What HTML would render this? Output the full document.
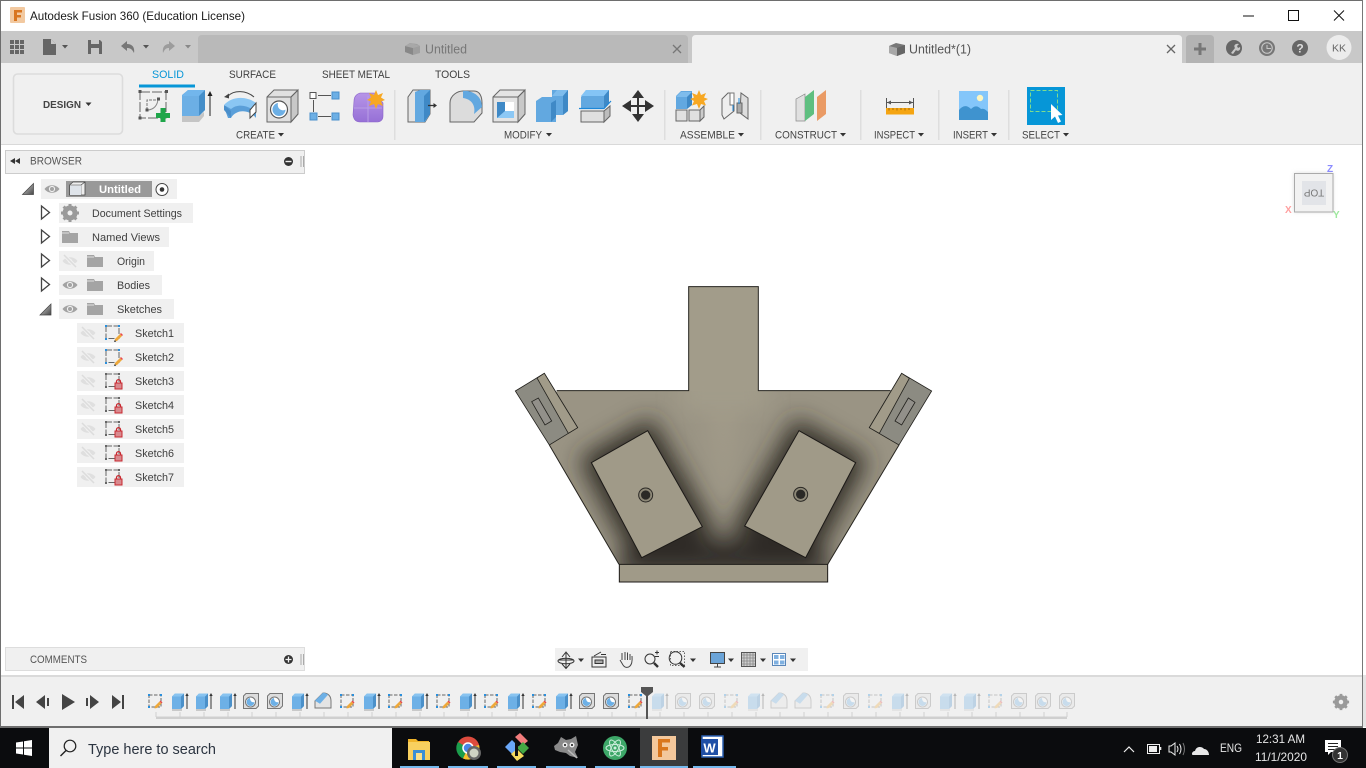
<!DOCTYPE html>
<html><head><meta charset="utf-8"><title>Autodesk Fusion 360</title>
<style>
html,body{margin:0;padding:0;width:1366px;height:768px;overflow:hidden;background:#fff}
svg{display:block;position:absolute;left:0;top:0}
text{font-family:"Liberation Sans",sans-serif;fill:#3c3c3c;font-size:10px}
.t{font-size:11px;fill:#3f3f3f}
.r{font-size:11px;fill:#444}
.l{font-size:11px;fill:#555}
</style></head><body>
<svg width="1366" height="768" viewBox="0 0 1366 768" xmlns="http://www.w3.org/2000/svg">
<defs>
<filter id="b1" x="-40%" y="-40%" width="180%" height="180%"><feGaussianBlur stdDeviation="36"/></filter>
<filter id="b2" x="-60%" y="-40%" width="220%" height="180%"><feGaussianBlur stdDeviation="30"/></filter>
<filter id="vs" x="-30%" y="-30%" width="160%" height="160%"><feGaussianBlur stdDeviation="2"/></filter>
<clipPath id="body"><path d="M170 332H566V20H775V332H1172L1197 495L983 853H357L148 495Z"/></clipPath>
<linearGradient id="tri" x1="0" y1="0" x2="1" y2="1"><stop offset="0" stop-color="#ddd"/><stop offset="1" stop-color="#444"/></linearGradient>
<linearGradient id="purp" x1="0" y1="0" x2="0" y2="1"><stop offset="0" stop-color="#b795e8"/><stop offset="1" stop-color="#9670d6"/></linearGradient>

<g id="eye"><path d="M-7.500 0C-4 -5 4 -5 7.500 0C4 5 -4 5 -7.500 0Z" fill="#a3a3a3"/><circle r="3.100" fill="#f0f0f0"/><circle r="2" fill="#a3a3a3"/></g>
<g id="eyeoff"><path d="M-7.500 0C-4 -5 4 -5 7.500 0C4 5 -4 5 -7.500 0Z" fill="#dfdfdf"/><circle r="2.200" fill="#f0f0f0"/><path d="M-6 -6L6 6" stroke="#f0f0f0" stroke-width="3.400"/><path d="M-6 -6L6 6" stroke="#dcdcdc" stroke-width="1.500"/></g>
<g id="folder"><path d="M0 1H7L8 3H16V13H0Z" fill="#a4a4a4"/><path d="M0 3H7" stroke="#f0f0f0" stroke-width=".8"/></g>
<g id="closed"><path d="M1 1L9 7.500L1 14Z" fill="#fff" stroke="#444" stroke-width="1.300"/></g>
<g id="open"><path d="M0 11L11 0V11Z" fill="url(#tri)" stroke="#444" stroke-width=".7"/></g>
<g id="skd"><rect x="1" y="1" width="13" height="12.500" fill="none" stroke="#666" stroke-width="1" stroke-dasharray="6 1.500"/></g>
<g id="sklock"><use href="#skd"/><g fill="#666"><rect x="0" y="0" width="2" height="2"/><rect x="13" y="0" width="2" height="2"/><rect x="0" y="13" width="2" height="2"/></g><path d="M11.500 10V8.600A2 2 0 0 1 15.500 8.600V10" fill="none" stroke="#c8282f" stroke-width="1.300"/><rect x="10" y="10" width="7" height="6" fill="#d88a8f" stroke="#c8282f"/></g>
<g id="skpen"><use href="#skd"/><g fill="#2a8fdc"><rect x="0" y="0" width="2" height="2"/><rect x="13" y="0" width="2" height="2"/><rect x="0" y="13" width="2" height="2"/></g><path d="M10 14L15 9L17 11L12 16L9.500 16.500Z" fill="#eea83a"/><path d="M15 9L16 8L18 10L17 11Z" fill="#e9484c"/><path d="M9 15.500h2v1.500h-2z" fill="#666"/></g>

<g id="tsk"><rect x="-6" y="-6" width="12" height="12" fill="none" stroke="#666" stroke-dasharray="3.500 1.500"/><g fill="#2a8fdc"><rect x="-7" y="-7" width="2" height="2"/><rect x="5" y="-7" width="2" height="2"/><rect x="-7" y="5" width="2" height="2"/><rect x="5" y="-7" width="2" height="2"/></g><path d="M0 5L4.500 0.500L6.500 2.500L2 7L-.5 7.500Z" fill="#eea83a"/><path d="M4.500 .5L5.500 -.5L7.500 1.500L6.500 2.500Z" fill="#e9484c"/></g>
<g id="tex"><path d="M-7 -4.500L-4 -7.500H5V5L2 8H-7Z" fill="#6db0e6"/><path d="M2 -4.500L5 -7.500V5L2 8Z" fill="#4b90c9"/><path d="M-7 -4.500H2L5 -7.500H-4Z" fill="#88c3f0"/><path d="M-7 8H2L3 7V10H-7Z" fill="#c9c9c9"/><path d="M8 8V-6" stroke="#333"/><path d="M8 -8L6.300 -5H9.700Z" fill="#333"/></g>
<g id="tho"><path d="M-7.500 -5L-5 -7.500H7.500V5L5 7.500H-7.500Z" fill="#ddd" stroke="#777"/><circle cy="1" cx="-.5" r="5" fill="#fff" stroke="#777"/><path d="M-4.500 1A4 4 0 0 0 3.500 1C1 2 -1 0 -1 -3A4 4 0 0 0 -4.500 1Z" fill="#6db0e6"/></g>
<g id="tfi"><path d="M-8 7V0L0 -8C6 -8 8 -4 8 0V7Z" fill="#e4e4e4" stroke="#777"/><path d="M-8 0L0 -8C2 -8 4 -7 5 -6L-3 3Z" fill="#6db0e6" transform="translate(0,-.3)"/></g>
<path id="car" d="M0 0H6L3 3.500Z" fill="#333"/>
<path id="car2" d="M0 0H6L3 3.500Z" fill="#555"/>
<g id="gear"><circle r="5" fill="none" stroke="#9a9a9a" stroke-width="5"/><g stroke="#9a9a9a" stroke-width="3"><path d="M0 -9V-6M0 6V9M-9 0H-6M6 0H9M-6.400 -6.400L-4.300 -4.300M4.300 4.300L6.400 6.400M-6.400 6.400L-4.300 4.300M4.300 -4.300L6.400 -6.400"/></g></g>
</defs>

<!-- window base -->
<rect width="1366" height="768" fill="#fff"/>
<rect x="0" y="0" width="1363" height="1" fill="#6e6e6e"/>
<rect x="0" y="31" width="1363" height="32" fill="#c8c8c8"/>
<rect x="0" y="63" width="1363" height="81" fill="#f0f0f0"/>
<rect x="0" y="144" width="1363" height="1" fill="#d9d9d9"/>
<rect x="1362" y="0" width="1" height="727" fill="#777"/>
<rect x="1363" y="0" width="3" height="728" fill="#fff"/>
<rect x="1363" y="675" width="3" height="52" fill="#e4e4e4"/>
<rect x="0" y="0" width="1" height="727" fill="#6e6e6e"/>

<!-- title bar -->
<rect x="10" y="7" width="15" height="16" rx="1" fill="#f2c9a0"/>
<path d="M14 10H22V12.500H17V15H21V17.500H17V21H14Z" fill="#d9751f"/>
<text x="30" y="20" style="font-size:12px;fill:#1a1a1a" textLength="215" lengthAdjust="spacingAndGlyphs">Autodesk Fusion 360 (Education License)</text>
<path d="M1243 16H1254" stroke="#111" stroke-width="1"/>
<rect x="1288.500" y="10.500" width="10" height="10" fill="none" stroke="#111"/>
<path d="M1334 10.500L1344 20.500M1344 10.500L1334 20.500" stroke="#111"/>

<!-- strip left icons -->
<g fill="#666"><rect x="10" y="40" width="4" height="4"/><rect x="15" y="40" width="4" height="4"/><rect x="20" y="40" width="4" height="4"/><rect x="10" y="45" width="4" height="4"/><rect x="15" y="45" width="4" height="4"/><rect x="20" y="45" width="4" height="4"/><rect x="10" y="50" width="4" height="4"/><rect x="15" y="50" width="4" height="4"/><rect x="20" y="50" width="4" height="4"/></g>
<path d="M43 39H51L56 44V55H43Z" fill="#666"/><path d="M51 39V44H56" fill="#c8c8c8"/>
<use href="#car2" x="62" y="45"/>
<path d="M88 40H100L102 42V54H88Z" fill="#666"/><rect x="91" y="40" width="8" height="4" fill="#c8c8c8"/><rect x="91" y="48" width="8" height="6" fill="#c8c8c8"/>
<path d="M121 46L127 41V44C132 44 135 47 134 53C132 49 130 48 127 48V51Z" fill="#777"/>
<use href="#car2" x="143" y="45"/>
<path d="M175 46L169 41V44C165 44 162 47 163 53C165 49 166 48 169 48V51Z" fill="#9c9c9c"/>
<path d="M185 45H191L188 48.500Z" fill="#888"/>

<!-- tabs -->
<path d="M198 63V39Q198 35 202 35H684Q688 35 688 39V63Z" fill="#b9b9b9"/>
<path d="M405 46L410 43L417 44L420 46V53L413 55L405 52Z" fill="#9e9e9e"/><path d="M405 46L413 48V55L405 52Z" fill="#888"/><path d="M405 46L411 43L420 46L413 48Z" fill="#a8a8a8"/>
<text x="425" y="53.500" style="font-size:12.500px;fill:#777" textLength="42" lengthAdjust="spacingAndGlyphs">Untitled</text>
<path d="M673 45L681 53M681 45L673 53" stroke="#777" stroke-width="1.300"/>
<path d="M692 63V39Q692 35 696 35H1178Q1182 35 1182 39V63Z" fill="#f0f0f0"/>
<path d="M889 46L896 43L905 45V53L897 56L889 53Z" fill="#777"/><path d="M889 46L897 48V56L889 53Z" fill="#a8a8a8"/><path d="M897 48L905 45V53L897 56Z" fill="#666"/>
<text x="909" y="53.500" style="font-size:12.500px;fill:#555" textLength="62" lengthAdjust="spacingAndGlyphs">Untitled*(1)</text>
<path d="M1167 45L1175 53M1175 45L1167 53" stroke="#666" stroke-width="1.300"/>
<path d="M1186 63V39Q1186 35 1190 35H1210Q1214 35 1214 39V63Z" fill="#b3b3b3"/>
<path d="M1200 43V55M1194 49H1206" stroke="#777" stroke-width="3"/>
<circle cx="1234" cy="48" r="8" fill="#666"/><path d="M1231 53L1235 48C1233 45 1236 43 1239 44L1237 46L1238 48L1240 47C1241 50 1238 52 1236 50L1233 54Z" fill="#c8c8c8"/>
<circle cx="1267" cy="48" r="7.500" fill="#777" stroke="#777"/><circle cx="1267" cy="48" r="5.800" fill="#c8c8c8"/><circle cx="1267" cy="48" r="4.700" fill="#777"/><path d="M1267 45V48.500H1271" stroke="#c8c8c8" fill="none"/>
<circle cx="1300" cy="48" r="8" fill="#666"/>
<text x="1300" y="52.500" text-anchor="middle" style="font-size:12px;font-weight:bold;fill:#ddd">?</text>
<circle cx="1339" cy="47.500" r="12.500" fill="#ececec"/>
<text x="1339" y="51.500" text-anchor="middle" style="font-size:10.500px;fill:#666">KK</text>

<!-- ribbon tabs -->
<text x="152" y="78" style="fill:#0696d7;font-size:11px" textLength="32" lengthAdjust="spacingAndGlyphs">SOLID</text>
<rect x="139" y="84.500" width="56" height="3" fill="#0696d7"/>
<text x="229" y="78" class="t" textLength="47" lengthAdjust="spacingAndGlyphs">SURFACE</text>
<text x="322" y="78" class="t" textLength="68" lengthAdjust="spacingAndGlyphs">SHEET METAL</text>
<text x="435" y="78" class="t" textLength="35" lengthAdjust="spacingAndGlyphs">TOOLS</text>
<rect x="13.500" y="74" width="109" height="60" rx="4" fill="#f0f0f0" stroke="#dcdcdc" stroke-width="1.600"/>
<text x="43" y="108" style="font-size:10.500px;font-weight:bold;fill:#444" textLength="38" lengthAdjust="spacingAndGlyphs">DESIGN</text>
<use href="#car" x="85.500" y="102.500"/>

<!-- sketch -->
<rect x="140" y="92" width="26" height="26" fill="none" stroke="#666" stroke-dasharray="10 2"/>
<g fill="#555"><rect x="138.500" y="90" width="3" height="3"/><rect x="165" y="90" width="3" height="3"/><rect x="138.500" y="116.500" width="3" height="3"/></g>
<path d="M147 110V100H158" fill="none" stroke="#777" stroke-dasharray="3 1"/><path d="M147 110C154 110 158 105 158 98" fill="none" stroke="#888"/>
<rect x="145.500" y="108.500" width="3" height="3" fill="#555"/><rect x="157" y="97.500" width="3" height="3" fill="#555"/>
<path d="M160.500 108H165.500V113H170V118H165.500V122H160.500V118H156V113H160.500Z" fill="#1fa64a"/>
<!-- extrude -->
<path d="M182 95L188 90H205V110L199 116H182Z" fill="#6cafe5"/><path d="M199 95L205 90V110L199 116Z" fill="#458ec9"/><path d="M182 96H199L205 90H188Z" fill="#72b6ec"/>
<path d="M182 116H199L204 112V116L199 122H182Z" fill="#c5c5c5"/>
<path d="M210 116V95" stroke="#222"/><path d="M210 91L207.500 96H212.500Z" fill="#222"/>
<!-- revolve -->
<path d="M224 107C231 99 247 99 252 106L256 111V118C249 109 236 109 231 118H228Z" fill="#5a9fd9"/>
<path d="M224 105C231 97 245 95 256 103L252 109C245 105 237 104 231 109Z" fill="#8ac6f3"/>
<path d="M224 105L231 111V118L224 110Z" fill="#4a8fcb"/>
<path d="M250 110L256 103V112L250 118Z" fill="#fff" stroke="#444"/>
<path d="M228 96C234 90 246 90 254 97" fill="none" stroke="#444"/><path d="M224 97L229 93.500V98.500Z" fill="#444"/>
<!-- hole -->
<path d="M267 97L274 90H298V114L291 122H267Z" fill="#e0e0e0" stroke="#666"/><path d="M291 97L298 90V114L291 122Z" fill="#c8c8c8" stroke="#666"/><path d="M267 97H291L298 90" fill="none" stroke="#666"/>
<circle cx="279" cy="109.500" r="8.500" fill="#fff" stroke="#555" stroke-width="1.200"/><path d="M272.500 109.500A6.500 6.500 0 0 0 285.500 109.500C282 112 276.500 108.500 278 103A6.500 6.500 0 0 0 272.500 109.500Z" fill="#6cafe5"/>
<!-- form connector -->
<rect x="310" y="92.500" width="6" height="6" fill="#fff" stroke="#555"/>
<rect x="332" y="92" width="7" height="7" fill="#6cafe5" stroke="#4a8fcb"/><rect x="310" y="113" width="7" height="7" fill="#6cafe5" stroke="#4a8fcb"/><rect x="332" y="113" width="7" height="7" fill="#6cafe5" stroke="#4a8fcb"/>
<path d="M318 95.500H331M313.500 100V112M318 116.500H331" stroke="#555"/>
<!-- form -->
<path d="M354 101Q354 95 360 93H375L383 103V116Q383 122 376 122H360Q354 122 353 115Z" fill="url(#purp)" stroke="#8a63c9" stroke-width=".6"/>
<path d="M354 108H382M368 96V122" stroke="#b99ee6" stroke-width="1"/>
<path d="M376 90L378 95L383 93L381 97.500L385 100L381 101.500L383 106L378 104L376 109L374 104L369 106L371 101.500L367 100L371 97.500L369 93L374 95Z" fill="#f7a823"/>
<text x="236" y="138.500" class="r" textLength="39" lengthAdjust="spacingAndGlyphs">CREATE</text><use href="#car" x="278" y="133"/>

<rect x="394" y="90" width="1.500" height="50" fill="#dedede"/>
<!-- press pull -->
<path d="M408 97L413 90H425L430 90V114L425 122H408Z" fill="#e4e4e4" stroke="#666"/><path d="M415 92L420 90H430V114L425 122H415Z" fill="#62a8e0"/><path d="M424 96L430 90V114L424 122Z" fill="#3f89c6"/>
<path d="M428 105.500H435" stroke="#333" stroke-width="1.300"/><path d="M437 105.500L433.500 103V108Z" fill="#333"/>
<!-- fillet -->
<path d="M450 122V103C450 95 458 91 463 91H474C480 91 482 97 482 103V113L474 122Z" fill="#dcdcdc" stroke="#666"/>
<path d="M463 91C468 90 482 93 482 107L474 114C476 105 471 99 463 98Z" fill="#62a8e0"/>
<!-- shell -->
<path d="M493 97L500 90H525V114L518 122H493Z" fill="#e4e4e4" stroke="#666"/><path d="M518 97L525 90V114L518 122Z" fill="#c8c8c8" stroke="#666"/><path d="M493 97H518L525 90" fill="none" stroke="#666"/>
<rect x="497" y="102" width="17" height="16" fill="#fff"/><path d="M497 102H505V111H514V118H497Z" fill="#3f89c6"/><path d="M505 111H514L514 118H497Z" fill="#8cc8f5"/>
<!-- combine -->
<path d="M536 101L542 97H552V90L556 90H568V111L563 115H556V122H536Z" fill="#62a8e0"/><path d="M552 96L557 90H568L563 96Z" fill="#7ebcec"/><path d="M563 96L568 90V111L563 115Z" fill="#3f89c6"/><path d="M551 103L556 100V117L551 122Z" fill="#3f89c6"/>
<!-- split -->
<path d="M581 97L586 90H609V101L604 108H581Z" fill="#62a8e0"/><path d="M581 96L586 90H609L604 96Z" fill="#84c4f5"/><path d="M604 96L609 90V103L604 108Z" fill="#3f89c6"/>
<path d="M581 111H604V122H581Z" fill="#e0e0e0" stroke="#666"/><path d="M604 111L610 106V116L604 122Z" fill="#bdbdbd" stroke="#666"/>
<path d="M579 108.500H604L611 101" fill="none" stroke="#1d87d8" stroke-width="1.200"/>
<!-- move -->
<path d="M638 96V116M628 106H648" stroke="#333" stroke-width="2"/><path d="M638 90L632 98H644ZM638 122L632 114H644ZM622 106L631 100V112ZM654 106L645 100V112Z" fill="#333"/>
<text x="504" y="138.500" class="r" textLength="38" lengthAdjust="spacingAndGlyphs">MODIFY</text><use href="#car" x="546" y="133"/>

<rect x="664" y="90" width="1.500" height="50" fill="#dedede"/>
<!-- assemble -->
<path d="M676 96L681 91H692V105H676Z" fill="#62a8e0"/><path d="M676 97H687L692 92H681Z" fill="#7ebcec"/><path d="M687 97L692 92V105L687 109Z" fill="#3f89c6"/><rect x="676" y="97" width="11" height="12" fill="#62a8e0"/>
<rect x="676" y="110" width="11" height="11" fill="#e0e0e0" stroke="#666"/><rect x="689" y="110" width="11" height="11" fill="#e0e0e0" stroke="#666"/><path d="M700 110L704 106V117L700 121Z" fill="#ccc" stroke="#666"/>
<path d="M699 90L701 95L706 93L704 97.500L708 99L704 101L706 105.500L701 104L699 109L697 104L692 105.500L694 101L690 99L694 97.500L692 93L697 95Z" fill="#f7a823"/>
<!-- joint -->
<path d="M722 99L728 93H734V111L724 119L722 115Z" fill="#eee" stroke="#666"/><path d="M748 98L741 93L740 113L748 119Z" fill="#ddd" stroke="#666"/><rect x="730" y="93" width="4" height="12" fill="#fff" stroke="#777"/><rect x="737" y="103" width="5" height="10" fill="#aaa" stroke="#666"/><path d="M733 105V111M739 98V104" stroke="#1d87d8"/>
<text x="680" y="138.500" class="r" textLength="55" lengthAdjust="spacingAndGlyphs">ASSEMBLE</text><use href="#car" x="738" y="133"/>

<rect x="760" y="90" width="1.500" height="50" fill="#dedede"/>
<!-- construct -->
<path d="M796 99L805 94V121H796Z" fill="#e0e0e0" stroke="#888" stroke-width=".7"/><path d="M805 97L814 90V114L805 121Z" fill="#5fbf80"/><path d="M817 97L826 90V114L817 121Z" fill="#ea9b65"/>
<text x="775" y="138.500" class="r" textLength="62" lengthAdjust="spacingAndGlyphs">CONSTRUCT</text><use href="#car" x="840" y="133"/>

<rect x="860" y="90" width="1.500" height="50" fill="#dedede"/>
<!-- inspect -->
<path d="M886.500 98V108M913.500 98V108M887 102.500H913" stroke="#555"/><path d="M887 102.500L891 100.500V104.500ZM913 102.500L909 100.500V104.500Z" fill="#555"/>
<rect x="886" y="108" width="28" height="6.500" fill="#f5a512"/>
<path d="M889 108V110.500M893 108V110M897 108V110.500M901 108V110M905 108V110.500M909 108V110" stroke="#8b5a00" stroke-width=".7"/>
<text x="874" y="138.500" class="r" textLength="41" lengthAdjust="spacingAndGlyphs">INSPECT</text><use href="#car" x="918" y="133"/>

<rect x="938" y="90" width="1.500" height="50" fill="#dedede"/>
<!-- insert -->
<rect x="959" y="91" width="29" height="29" fill="#84c6fa"/>
<path d="M959 120V110C963 105 967 105 971 109C975 105 978 106 981 109C984 108 986 110 988 112V120Z" fill="#3f93cf"/>
<circle cx="980" cy="98" r="3.200" fill="#fcf5c0"/>
<text x="953" y="138.500" class="r" textLength="35" lengthAdjust="spacingAndGlyphs">INSERT</text><use href="#car" x="991" y="133"/>

<rect x="1008" y="90" width="1.500" height="50" fill="#dedede"/>
<!-- select -->
<rect x="1027" y="87" width="38" height="38" fill="#0696d7"/>
<rect x="1030.500" y="90.500" width="27" height="21" fill="none" stroke="#7fdc8e" stroke-dasharray="4 2"/>
<path d="M1051 104V120L1055 116.500L1058 123L1061 121.500L1058 115.500L1062.500 115Z" fill="#fff"/>
<text x="1022" y="138.500" class="r" textLength="38" lengthAdjust="spacingAndGlyphs">SELECT</text><use href="#car" x="1063" y="133"/>

<!-- browser -->
<rect x="5.500" y="150.500" width="299" height="23" fill="#f0f0f0" stroke="#ccc"/>
<path d="M15 158V164L10 161ZM20 158V164L15 161Z" fill="#333"/>
<text x="30" y="164.500" class="l" textLength="52" lengthAdjust="spacingAndGlyphs">BROWSER</text>
<circle cx="288.500" cy="161.500" r="4.500" fill="#333"/><rect x="285.500" y="160.800" width="6" height="1.400" fill="#f0f0f0"/>
<path d="M301 156V167M303.500 156V167" stroke="#aaa"/>

<!-- tree -->
<use href="#open" x="22.500" y="183.500"/>
<rect x="41" y="179" width="136" height="20" fill="#f0f0f0"/>
<use href="#eye" x="52" y="189"/>
<rect x="66" y="181" width="86" height="16" fill="#999"/>
<path d="M69.500 185L73 182H85V195H69.500Z" fill="#eee" stroke="#444" stroke-width=".8"/><path d="M69.500 185H81V195" fill="none" stroke="#777" stroke-width=".7"/><path d="M81 185L85 182" stroke="#444" stroke-width=".7"/><path d="M70 185.500H81V195H70Z" fill="#dfe4ea"/>
<text x="99" y="193" style="fill:#fff;font-weight:bold;font-size:11px" textLength="42" lengthAdjust="spacingAndGlyphs">Untitled</text>
<circle cx="162" cy="189.500" r="6" fill="#fff" stroke="#444"/><circle cx="162" cy="189.500" r="2.300" fill="#333"/>

<use href="#closed" x="40.500" y="205"/>
<rect x="59" y="203" width="134" height="20" fill="#f0f0f0"/>
<use href="#gear" x="70" y="213"/>
<text x="92" y="217" class="t" textLength="90" lengthAdjust="spacingAndGlyphs">Document Settings</text>

<use href="#closed" x="40.500" y="229"/>
<rect x="59" y="227" width="110" height="20" fill="#f0f0f0"/>
<use href="#folder" x="62" y="230"/>
<text x="92" y="241" class="t" textLength="68" lengthAdjust="spacingAndGlyphs">Named Views</text>

<use href="#closed" x="40.500" y="253"/>
<rect x="59" y="251" width="95" height="20" fill="#f0f0f0"/>
<use href="#eyeoff" x="70" y="261"/>
<use href="#folder" x="87" y="254"/>
<text x="117" y="265" class="t" textLength="28" lengthAdjust="spacingAndGlyphs">Origin</text>

<use href="#closed" x="40.500" y="277"/>
<rect x="59" y="275" width="103" height="20" fill="#f0f0f0"/>
<use href="#eye" x="70" y="285"/>
<use href="#folder" x="87" y="278"/>
<text x="117" y="289" class="t" textLength="33" lengthAdjust="spacingAndGlyphs">Bodies</text>

<use href="#open" x="40" y="304"/>
<rect x="59" y="299" width="115" height="20" fill="#f0f0f0"/>
<use href="#eye" x="70" y="309"/>
<use href="#folder" x="87" y="302"/>
<text x="117" y="313" class="t" textLength="45" lengthAdjust="spacingAndGlyphs">Sketches</text>

<g>
<rect x="77" y="323" width="107" height="20" fill="#f0f0f0"/><use href="#eyeoff" x="88" y="333"/><use href="#skpen" x="105" y="325"/><text x="135" y="337" class="t" textLength="39" lengthAdjust="spacingAndGlyphs">Sketch1</text>
<rect x="77" y="347" width="107" height="20" fill="#f0f0f0"/><use href="#eyeoff" x="88" y="357"/><use href="#skpen" x="105" y="349"/><text x="135" y="361" class="t" textLength="39" lengthAdjust="spacingAndGlyphs">Sketch2</text>
<rect x="77" y="371" width="107" height="20" fill="#f0f0f0"/><use href="#eyeoff" x="88" y="381"/><use href="#sklock" x="105" y="373"/><text x="135" y="385" class="t" textLength="39" lengthAdjust="spacingAndGlyphs">Sketch3</text>
<rect x="77" y="395" width="107" height="20" fill="#f0f0f0"/><use href="#eyeoff" x="88" y="405"/><use href="#sklock" x="105" y="397"/><text x="135" y="409" class="t" textLength="39" lengthAdjust="spacingAndGlyphs">Sketch4</text>
<rect x="77" y="419" width="107" height="20" fill="#f0f0f0"/><use href="#eyeoff" x="88" y="429"/><use href="#sklock" x="105" y="421"/><text x="135" y="433" class="t" textLength="39" lengthAdjust="spacingAndGlyphs">Sketch5</text>
<rect x="77" y="443" width="107" height="20" fill="#f0f0f0"/><use href="#eyeoff" x="88" y="453"/><use href="#sklock" x="105" y="445"/><text x="135" y="457" class="t" textLength="39" lengthAdjust="spacingAndGlyphs">Sketch6</text>
<rect x="77" y="467" width="107" height="20" fill="#f0f0f0"/><use href="#eyeoff" x="88" y="477"/><use href="#sklock" x="105" y="469"/><text x="135" y="481" class="t" textLength="39" lengthAdjust="spacingAndGlyphs">Sketch7</text>
</g>

<!-- comments -->
<rect x="5.500" y="647.500" width="299" height="23" fill="#f0f0f0" stroke="#ddd"/>
<text x="30" y="663" class="l" textLength="57" lengthAdjust="spacingAndGlyphs">COMMENTS</text>
<circle cx="288.500" cy="659.500" r="4.500" fill="#333"/><path d="M285.500 659.500H291.500M288.500 656.500V662.500" stroke="#f0f0f0" stroke-width="1.300"/>
<path d="M301 654V665M303.500 654V665" stroke="#aaa"/>

<!-- model -->
<g transform="translate(500,280) scale(.33333)">
<g clip-path="url(#body)">
<rect x="100" y="0" width="1150" height="900" fill="#9a9484"/>
<g filter="url(#b1)">
<path d="M443 452L607 740L425 833L274 548Z" fill="#302d27" stroke="#302d27" stroke-width="56"/>
<path d="M897 452L1067 548L917 833L734 738Z" fill="#302d27" stroke="#302d27" stroke-width="56"/>
<path d="M357 870H983L930 790H420Z" fill="#2e2b25" stroke="#2e2b25" stroke-width="30"/>
</g>
<path d="M610 345H730L685 650H655Z" fill="#a09a88" filter="url(#b2)"/>
<path d="M566 20H775V332H566Z" fill="#a29c8a"/>
<path d="M540 290H800V390H540Z" fill="#a29c8a" filter="url(#b2)"/>
</g>
<path d="M170 332H566V20H775V332H1172M148 495L357 853M1197 495L983 853" fill="none" stroke="#26241f" stroke-width="3"/>
<path d="M358 853H983V906H358Z" fill="#a09a88" stroke="#1c1a17" stroke-width="3"/>
<path d="M443 452L607 740L425 833L274 548Z" fill="#a09a88" stroke="#1c1a17" stroke-width="3"/>
<path d="M897 452L1067 548L917 833L734 738Z" fill="#a09a88" stroke="#1c1a17" stroke-width="3"/>
<circle cx="437" cy="645" r="21" fill="#8d8877" stroke="#2b2925" stroke-width="3"/><circle cx="437" cy="645" r="14" fill="#2a2926"/>
<circle cx="902" cy="643" r="21" fill="#8d8877" stroke="#2b2925" stroke-width="3"/><circle cx="902" cy="643" r="14" fill="#2a2926"/>
<path d="M46 333L133 280L233 443L148 495Z" fill="#8c8b82" stroke="#22211d" stroke-width="2.400"/>
<path d="M111 294L133 280L233 443L205 460Z" fill="#a19b89" stroke="#22211d" stroke-width="2.400"/>
<path d="M95 365L115 354L155 423L135 435Z" fill="#92908a" stroke="#22211d" stroke-width="2.400"/>
<path d="M1205 280L1295 333L1197 495L1108 443Z" fill="#8c8b82" stroke="#22211d" stroke-width="2.400"/>
<path d="M1205 280L1228 295L1138 460L1108 443Z" fill="#a19b89" stroke="#22211d" stroke-width="2.400"/>
<path d="M1225 354L1245 367L1205 435L1185 423Z" fill="#92908a" stroke="#22211d" stroke-width="2.400"/>
</g>

<!-- viewcube -->
<rect x="1294" y="173" width="39" height="39" fill="#bbb" filter="url(#vs)" opacity=".5"/>
<rect x="1294.500" y="173.500" width="38.500" height="38.500" fill="#f2f2f2" stroke="#aaa"/>
<rect x="1302" y="181" width="24" height="24" fill="#e2e4e8"/>
<text x="1314" y="196.500" text-anchor="middle" transform="rotate(180 1314 193)" style="font-size:10px;fill:#777">TOP</text>
<text x="1327" y="172" style="font-size:10px;font-weight:bold;fill:#8a8aff">Z</text>
<text x="1285" y="213" style="font-size:10px;font-weight:bold;fill:#ffa0a0">X</text>
<text x="1333" y="218" style="font-size:10px;font-weight:bold;fill:#9de89d">Y</text>

<!-- navbar -->
<rect x="555" y="648" width="253" height="23" fill="#f0f0f0"/>
<g fill="none" stroke="#333">
<path d="M566 653V668M562 657L566 652L570 657M562 664L566 668.500L570 664M558.500 660H574" stroke-width="1"/><ellipse cx="566" cy="661" rx="8" ry="2.800"/>
<path d="M592 657H606V667H592Z"/><rect x="595" y="660" width="8" height="3.500" fill="#aaa"/><path d="M594 656L601 652M601 654.500H606"/>
<path d="M620 660L623 665C625 668 628 668 630 666C633 663 632 658 632 656M622 660V653M625 660V652M627.500 660V652.500M630 660V654" stroke="#444"/>
<circle cx="650" cy="659" r="5"/><path d="M654 663L658 667" stroke-width="2.400"/><path d="M655 652.500H659M657 650.500V654.500M655 656.500H659"/>
<rect x="670.500" y="651.500" width="14" height="14" stroke-dasharray="1.500 1.500" stroke="#666"/><circle cx="675.500" cy="658" r="6.300"/><path d="M680 663L684.500 667" stroke-width="2.400"/>
</g>
<use href="#car" x="578" y="658.500"/><use href="#car" x="690" y="658.500"/>
<rect x="710.500" y="652.500" width="14" height="11" fill="#6ba4d8" stroke="#444"/><path d="M714 667H721M717.500 664V667" stroke="#444"/>
<use href="#car" x="728" y="658.500"/>
<rect x="741.500" y="652.500" width="14" height="14" fill="#cfcfcf" stroke="#555"/><path d="M744 653V666M747 653V666M750 653V666M753 653V666M742 655H755M742 658H755M742 661H755M742 664H755" stroke="#888" stroke-width=".8"/>
<use href="#car" x="760" y="658.500"/>
<rect x="772.500" y="653.500" width="13" height="12" fill="#fff" stroke="#5a86b8"/><rect x="774" y="655" width="4.500" height="4" fill="#7fb0e0"/><rect x="780" y="655" width="4.500" height="4" fill="#7fb0e0"/><rect x="774" y="660.500" width="4.500" height="4" fill="#7fb0e0"/><rect x="780" y="660.500" width="4.500" height="4" fill="#7fb0e0"/>
<use href="#car" x="790" y="658.500"/>

<!-- timeline -->
<rect x="1" y="675" width="1361" height="2" fill="#dadada"/>
<rect x="1" y="677" width="1361" height="49" fill="#f0f0f0"/>
<rect x="0" y="726" width="1363" height="2" fill="#6e6e6e"/>
<rect x="0" y="728" width="1366" height="40" fill="#0b0c0e"/>
<g fill="#444">
<rect x="12" y="695" width="2" height="14"/><path d="M24 695V709L15 702Z"/>
<path d="M36 702L45 695V709ZM47 698H49V706H47Z"/>
<path d="M62 694L75 702L62 710Z"/>
<path d="M86 698H88V706H86ZM90 695L99 702L90 709Z"/>
<path d="M112 695L121 702L112 709ZM122 695H124V709H122Z"/>
</g>
<rect x="156" y="716.500" width="911" height="2.500" fill="#cfcfcf"/>
<path d="M156 712V717M180 712V717M204 712V717M228 712V717M252 712V717M276 712V717M300 712V717M324 712V717M348 712V717M372 712V717M396 712V717M420 712V717M444 712V717M468 712V717M492 712V717M516 712V717M540 712V717M564 712V717M588 712V717M612 712V717M636 712V717M660 712V717M684 712V717M708 712V717M732 712V717M756 712V717M780 712V717M804 712V717M828 712V717M852 712V717M876 712V717M900 712V717M924 712V717M948 712V717M972 712V717M996 712V717M1020 712V717M1044 712V717M1067 712V717" stroke="#cfcfcf" stroke-width="1"/>
<use href="#tsk" x="155" y="701"/><use href="#tex" x="179" y="701"/><use href="#tex" x="203" y="701"/><use href="#tex" x="227" y="701"/><use href="#tho" x="251" y="701"/><use href="#tho" x="275" y="701"/><use href="#tex" x="299" y="701"/><use href="#tfi" x="323" y="701"/><use href="#tsk" x="347" y="701"/><use href="#tex" x="371" y="701"/><use href="#tsk" x="395" y="701"/><use href="#tex" x="419" y="701"/><use href="#tsk" x="443" y="701"/><use href="#tex" x="467" y="701"/><use href="#tsk" x="491" y="701"/><use href="#tex" x="515" y="701"/><use href="#tsk" x="539" y="701"/><use href="#tex" x="563" y="701"/><use href="#tho" x="587" y="701"/><use href="#tho" x="611" y="701"/><use href="#tsk" x="635" y="701"/>
<g opacity=".3">
<use href="#tex" x="659" y="701"/><use href="#tho" x="683" y="701"/><use href="#tho" x="707" y="701"/><use href="#tsk" x="731" y="701"/><use href="#tex" x="755" y="701"/><use href="#tfi" x="779" y="701"/><use href="#tfi" x="803" y="701"/><use href="#tsk" x="827" y="701"/><use href="#tho" x="851" y="701"/><use href="#tsk" x="875" y="701"/><use href="#tex" x="899" y="701"/><use href="#tho" x="923" y="701"/><use href="#tex" x="947" y="701"/><use href="#tex" x="971" y="701"/><use href="#tsk" x="995" y="701"/><use href="#tho" x="1019" y="701"/><use href="#tho" x="1043" y="701"/><use href="#tho" x="1067" y="701"/>
</g>
<path d="M641 687H653V692L648 696V719H646V696L641 692Z" fill="#555"/>
<use href="#gear" x="1341" y="702" transform="translate(1341 702) scale(.9) translate(-1341 -702)"/>

<!-- taskbar -->
<g fill="#fff"><path d="M16 742.500L23 741.500V747.500H16ZM24 741.300L32 740V747.500H24ZM16 748.500H23V754.500L16 753.500ZM24 748.500H32V756L24 754.700Z"/></g>
<rect x="49" y="728" width="343" height="40" fill="#f0f0f0"/>
<circle cx="70" cy="746" r="5.800" fill="none" stroke="#222" stroke-width="1.200"/><path d="M66 750.500L60.500 756" stroke="#222" stroke-width="1.400"/>
<text x="88" y="754" style="font-size:14.500px;fill:#2b3440" textLength="128" lengthAdjust="spacingAndGlyphs">Type here to search</text>

<path d="M408 739H416L418 741H429V742H408Z" fill="#f0b429"/><path d="M408 742H430V760H408Z" fill="#f8d05f"/><path d="M413 750H425V760H413Z" fill="#3b8fd6"/><path d="M416 753H422V760H416Z" fill="#fbe08a"/>
<rect x="400" y="766" width="39" height="2" fill="#76b9ed"/>

<circle cx="468" cy="748" r="11.500" fill="#dd4b3e"/><path d="M468 748L458 742A11.500 11.500 0 0 0 463 758.500Z" fill="#1a9d4c"/><path d="M468 748L479 745A11.500 11.500 0 0 1 463 758.500Z" fill="#f8c12c"/><circle cx="468" cy="748" r="5" fill="#4a86e8" stroke="#fff" stroke-width="1.500"/>
<circle cx="474" cy="753" r="7" fill="#666"/><circle cx="474" cy="753" r="4.500" fill="#cfd3c4"/>
<rect x="448" y="766" width="40" height="2" fill="#76b9ed"/>

<path d="M505 747L512 740L519 747L512 754Z" fill="#6aa7f8"/><path d="M515 737L520 733L528 741L523 745Z" fill="#f27c7c"/><path d="M517 748L523 742L529 748L523 754Z" fill="#45a844"/><path d="M511 754L517 749L524 756L517 761Z" fill="#f5db5d"/><path d="M515 741L518 744V756L515 756Z" fill="#111"/>
<rect x="497" y="766" width="39" height="2" fill="#76b9ed"/>

<path d="M554 746L558 743L561 737L566 740L571 739L576 736L578 745L575 752L578 758L570 756L566 753L560 752L555 750Z" fill="#8a8a8a"/><circle cx="565" cy="745" r="2.500" fill="#eee"/><circle cx="572" cy="745" r="2.500" fill="#eee"/><circle cx="565" cy="745" r="1" fill="#111"/><circle cx="572" cy="745" r="1" fill="#111"/><path d="M568 750L577 758" stroke="#bbb" stroke-width="1.500"/>
<rect x="546" y="766" width="40" height="2" fill="#76b9ed"/>

<circle cx="615" cy="748" r="12" fill="#3da768"/><g fill="none" stroke="#cdeedd" stroke-width="1"><ellipse cx="615" cy="748" rx="9" ry="3.500"/><ellipse cx="615" cy="748" rx="9" ry="3.500" transform="rotate(60 615 748)"/><ellipse cx="615" cy="748" rx="9" ry="3.500" transform="rotate(-60 615 748)"/></g><circle cx="615" cy="748" r="1.500" fill="#cdeedd"/>
<rect x="595" y="766" width="40" height="2" fill="#76b9ed"/>

<rect x="640" y="728" width="48" height="40" fill="#3b3c3d"/>
<rect x="652" y="736" width="24" height="24" fill="#f3c79b"/>
<path d="M658 739H670V742.500H662V747H668V750.500H662V757H658Z" fill="#d9761d"/>
<rect x="640" y="766" width="48" height="2" fill="#76b9ed"/>

<rect x="702" y="736" width="21" height="21" fill="#fff" stroke="#2b5fb0" stroke-width="1.500"/>
<rect x="701" y="739" width="17" height="16" fill="#1f4fa6"/>
<text x="709.500" y="752.500" text-anchor="middle" style="font-size:13px;font-weight:bold;fill:#fff">W</text>
<rect x="693" y="766" width="43" height="2" fill="#76b9ed"/>

<!-- tray -->
<path d="M1124 752L1129 747L1134 752" fill="none" stroke="#eee" stroke-width="1.200"/>
<rect x="1147.500" y="744.500" width="12" height="9" fill="none" stroke="#eee"/><rect x="1149" y="746" width="8" height="6" fill="#eee"/><rect x="1160" y="747" width="1.300" height="3" fill="#eee"/>
<path d="M1169 746H1171L1175 743V755L1171 752H1169Z" fill="none" stroke="#eee"/><path d="M1177 746Q1179 749 1177 752M1179.500 744Q1182.500 749 1179.500 754" fill="none" stroke="#eee"/><path d="M1183 743Q1186 749 1183 755" fill="none" stroke="#777"/>
<path d="M1193 755C1191 755 1192 751 1195 751C1196 746 1202 746 1204 749C1207 749 1209 752 1209 755Z" fill="#e8e8e8"/>
<text x="1220" y="752" style="font-size:12px;fill:#e6e6e6" textLength="22" lengthAdjust="spacingAndGlyphs">ENG</text>
<text x="1256" y="743" style="font-size:12px;fill:#e6e6e6" textLength="49" lengthAdjust="spacingAndGlyphs">12:31 AM</text>
<text x="1255" y="761" style="font-size:12px;fill:#e6e6e6" textLength="52" lengthAdjust="spacingAndGlyphs">11/1/2020</text>
<path d="M1325 740H1341V752H1331L1328 755V752H1325Z" fill="#fff"/><path d="M1328 743.500H1338M1328 746.500H1338M1328 749.500H1335" stroke="#222"/>
<circle cx="1340" cy="755" r="7.500" fill="#333" stroke="#777"/>
<text x="1340" y="759" text-anchor="middle" style="font-size:10.500px;fill:#fff;font-weight:bold">1</text>
</svg>
</body></html>
